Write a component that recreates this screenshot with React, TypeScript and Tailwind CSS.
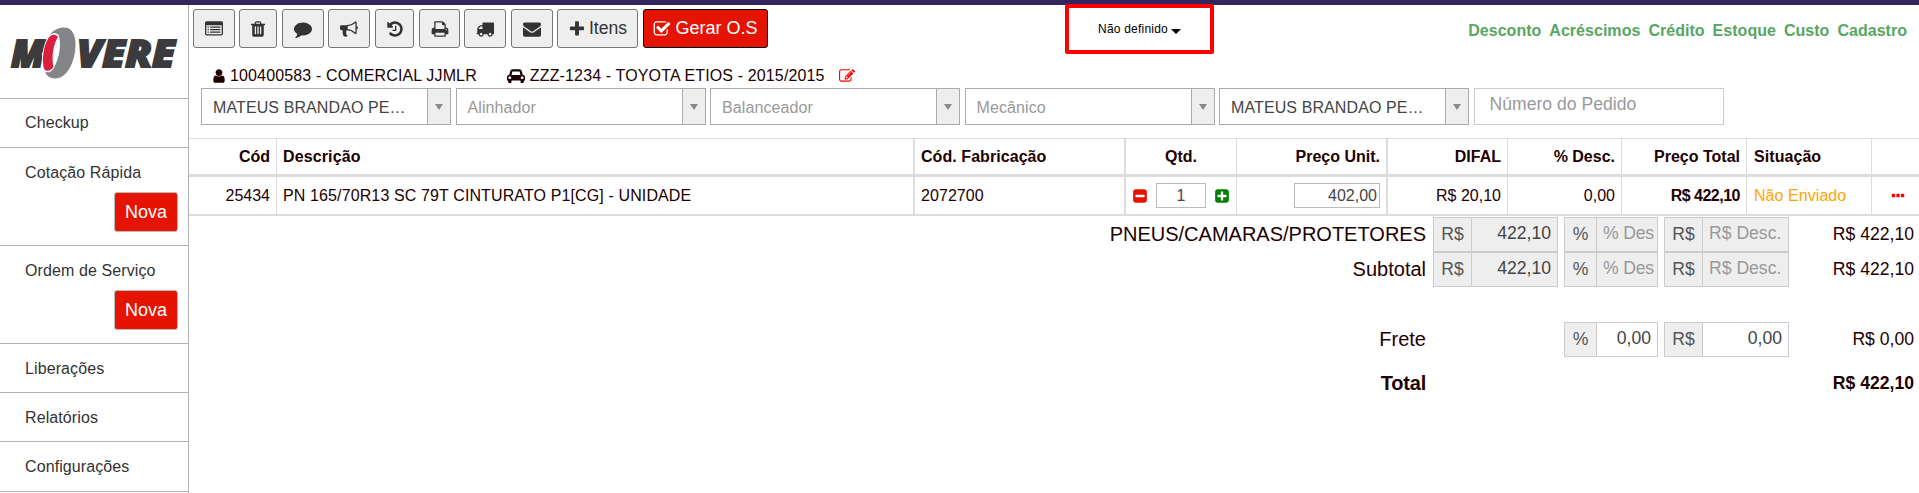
import type { ReactNode } from "react";

type IconName = keyof typeof icons;

const icons = {
  list: "M384 1184v64q0 13-9.5 22.5t-22.5 9.5h-64q-13 0-22.5-9.5t-9.5-22.5v-64q0-13 9.5-22.5t22.5-9.5h64q13 0 22.5 9.5t9.5 22.5zm0-256v64q0 13-9.5 22.5t-22.5 9.5h-64q-13 0-22.5-9.5t-9.5-22.5v-64q0-13 9.5-22.5t22.5-9.5h64q13 0 22.5 9.5t9.5 22.5zm0-256v64q0 13-9.5 22.5t-22.5 9.5h-64q-13 0-22.5-9.5t-9.5-22.5v-64q0-13 9.5-22.5t22.5-9.5h64q13 0 22.5 9.5t9.5 22.5zm1152 512v64q0 13-9.5 22.5t-22.5 9.5h-960q-13 0-22.5-9.5t-9.5-22.5v-64q0-13 9.5-22.5t22.5-9.5h960q13 0 22.5 9.5t9.5 22.5zm0-256v64q0 13-9.5 22.5t-22.5 9.5h-960q-13 0-22.5-9.5t-9.5-22.5v-64q0-13 9.5-22.5t22.5-9.5h960q13 0 22.5 9.5t9.5 22.5zm0-256v64q0 13-9.5 22.5t-22.5 9.5h-960q-13 0-22.5-9.5t-9.5-22.5v-64q0-13 9.5-22.5t22.5-9.5h960q13 0 22.5 9.5t9.5 22.5zm128 704v-832q0-13-9.5-22.5t-22.5-9.5h-1472q-13 0-22.5 9.5t-9.5 22.5v832q0 13 9.5 22.5t22.5 9.5h1472q13 0 22.5-9.5t9.5-22.5zm128-1088v1088q0 66-47 113t-113 47h-1472q-66 0-113-47t-47-113v-1088q0-66 47-113t113-47h1472q66 0 113 47t47 113z",
  trash: "M704 1376v-704q0-14-9-23t-23-9h-64q-14 0-23 9t-9 23v704q0 14 9 23t23 9h64q14 0 23-9t9-23zm256 0v-704q0-14-9-23t-23-9h-64q-14 0-23 9t-9 23v704q0 14 9 23t23 9h64q14 0 23-9t9-23zm256 0v-704q0-14-9-23t-23-9h-64q-14 0-23 9t-9 23v704q0 14 9 23t23 9h64q14 0 23-9t9-23zm-544-992h448l-48-117q-7-9-17-11h-317q-10 2-17 11zm928 32v64q0 14-9 23t-23 9h-96v948q0 83-47 143.5t-113 60.5h-832q-66 0-113-58.5t-47-141.5v-952h-96q-14 0-23-9t-9-23v-64q0-14 9-23t23-9h309l70-167q15-37 54-63t79-26h320q40 0 79 26t54 63l70 167h309q14 0 23 9t9 23z",
  comment: "M1792 896q0 174-120 321.5t-326 233-450 85.5q-70 0-145-8-198 175-460 242-49 14-114 22-17 2-30.5-9t-17.5-29v-1q-3-4-.5-12t2-10 4.5-9.5l6-9 7-8.5 8-9q7-8 31-34.5t34.5-38 31-39.5 32.5-51 27-59 26-76q-157-89-247.5-220t-90.5-281q0-130 71-248.5t191-204.5 286-136.5 348-50.5q244 0 450 85.5t326 233 120 321.5z",
  bullhorn: "M1664 640q53 0 90.5 37.5t37.5 90.5-37.5 90.5-90.5 37.5v384q0 52-38 90t-90 38q-417-347-812-380-58 19-91 66t-31 100.5 40 92.5q-20 33-23 65.5t6 58 33.5 55 48 50 61.5 50.5q-29 58-111.5 83t-168.5 11.5-132-55.5q-7-23-29.5-87.5t-32-94.5-23-89-15-101 3.5-98.5 22-110.5h-122q-66 0-113-47t-47-113v-192q0-66 47-113t113-47h480q435 0 896-384 52 0 90 38t38 90v384zm-128 604v-954q-394 302-768 343v270q377 42 768 341z",
  history: "M1664 896q0 156-61 298t-164 245-245 164-298 61q-172 0-327-72.5t-264-204.5q-7-10-6.5-22.5t8.5-20.5l137-138q10-9 25-9 16 2 23 12 73 95 179 147t225 52q104 0 198.5-40.5t163.5-109.5 109.5-163.5 40.5-198.5-40.5-198.5-109.5-163.5-163.5-109.5-198.5-40.5q-98 0-188 35.5t-160 101.5l137 138q31 30 14 69-17 40-59 40h-448q-26 0-45-19t-19-45v-448q0-42 40-59 39-17 69 14l130 129q107-101 244.5-156.5t284.5-55.5q156 0 298 61t245 164 164 245 61 298zm-640-288v448q0 14-9 23t-23 9h-320q-14 0-23-9t-9-23v-64q0-14 9-23t23-9h224v-352q0-14 9-23t23-9h64q14 0 23 9t9 23z",
  print: "M448 1536h896v-256h-896v256zm0-640h896v-384h-160q-40 0-68-28t-28-68v-160h-640v640zm1152 64q0-26-19-45t-45-19-45 19-19 45 19 45 45 19 45-19 19-45zm128 0v416q0 13-9.5 22.5t-22.5 9.5h-224v160q0 40-28 68t-68 28h-960q-40 0-68-28t-28-68v-160h-224q-13 0-22.5-9.5t-9.5-22.5v-416q0-79 56.5-135.5t135.5-56.5h64v-544q0-40 28-68t68-28h672q40 0 88 20t76 48l152 152q28 28 48 76t20 88v256h64q79 0 135.5 56.5t56.5 135.5z",
  truck: "M640 1408q0-52-38-90t-90-38-90 38-38 90 38 90 90 38 90-38 38-90zm-384-512h384v-256h-158q-13 0-22 9l-195 195q-9 9-9 22v30zm1280 512q0-52-38-90t-90-38-90 38-38 90 38 90 90 38 90-38 38-90zm256-1088v1024q0 15-4 26.5t-13.5 18.5-16.5 11.5-23.5 6-22.5 2-25.5 0-22.5-.5q0 106-75 181t-181 75-181-75-75-181h-384q0 106-75 181t-181 75-181-75-75-181h-64q-3 0-22.5.5t-25.5 0-22.5-2-23.5-6-16.5-11.5-13.5-18.5-4-26.5q0-26 19-45t45-19v-320q0-8-.5-35t0-38 2.5-34.5 6.5-37 14-30.5 22.5-30l198-198q19-19 50.5-32t58.5-13h160v-192q0-26 19-45t45-19h1024q26 0 45 19t19 45z",
  envelope: "M1792 710v794q0 66-47 113t-113 47h-1472q-66 0-113-47t-47-113v-794q44 49 101 87 362 246 497 345 57 42 92.5 65.5t94.5 48 110 24.5h2q51 0 110-24.5t94.5-48 92.5-65.5q170-123 498-345 57-39 100-87zm0-294q0 79-49 151t-122 123q-376 261-468 325-10 7-42.5 31t-54 38.5-52 32.5-57.5 27-50 9h-2q-23 0-50-9t-57.5-27-52-32.5-54-38.5-42.5-31q-91-64-262-182.5t-205-142.5q-62-42-117-115.5t-55-136.5q0-78 41.5-130t118.5-52h1472q65 0 112.5 47t47.5 113z",
  plus: "M1600 736v192q0 40-28 68t-68 28h-416v416q0 40-28 68t-68 28h-192q-40 0-68-28t-28-68v-416h-416q-40 0-68-28t-28-68v-192q0-40 28-68t68-28h416v-416q0-40 28-68t68-28h192q40 0 68 28t28 68v416h416q40 0 68 28t28 68z",
  check: "M1472 930v318q0 119-84.5 203.5t-203.5 84.5h-832q-119 0-203.5-84.5t-84.5-203.5v-832q0-119 84.5-203.5t203.5-84.5h832q63 0 117 25 15 7 18 23 3 17-9 29l-49 49q-10 10-23 10-3 0-9-2-23-6-45-6h-832q-66 0-113 47t-47 113v832q0 66 47 113t113 47h832q66 0 113-47t47-113v-254q0-13 9-22l64-64q10-10 23-10 6 0 12 3 20 8 20 29zm231-489l-814 814q-24 24-57 24t-57-24l-430-430q-24-24-24-57t24-57l110-110q24-24 57-24t57 24l263 263 647-647q24-24 57-24t57 24l110 110q24 24 24 57t-24 57z",
  user: "M1536 1399q0 109-62.5 187t-150.5 78h-854q-88 0-150.5-78t-62.5-187q0-85 8.5-160.5t31.5-152 58.5-131 94-89 134.5-34.5q131 128 313 128t313-128q76 0 134.5 34.5t94 89 58.5 131 31.5 152 8.5 160.5zm-256-887q0 159-112.5 271.5t-271.5 112.5-271.5-112.5-112.5-271.5 112.5-271.5 271.5-112.5 271.5 112.5 112.5 271.5z",
  car: "M480 1088q0-66-47-113t-113-47-113 47-47 113 47 113 113 47 113-47 47-113zm36-320h1016l-89-357q-2-8-14-17.5t-21-9.5h-768q-9 0-21 9.5t-14 17.5zm1372 320q0-66-47-113t-113-47-113 47-47 113 47 113 113 47 113-47 47-113zm160-96v384q0 14-9 23t-23 9h-96v128q0 80-56 136t-136 56-136-56-56-136v-128h-1024v128q0 80-56 136t-136 56-136-56-56-136v-128h-96q-14 0-23-9t-9-23v-384q0-93 65.5-158.5t158.5-65.5h28l105-419q23-94 104-157.5t179-63.5h768q98 0 179 63.5t104 157.5l105 419h28q93 0 158.5 65.5t65.5 158.5z",
  edit: "M888 1184l116-116-152-152-116 116v56h96v96h56zm440-720q-16-16-33 1l-350 350q-17 17-1 33t33-1l350-350q17-17 1-33zm80 594v190q0 119-84.5 203.5t-203.5 84.5h-832q-119 0-203.5-84.5t-84.5-203.5v-832q0-119 84.5-203.5t203.5-84.5h832q63 0 117 25 15 7 18 23 3 17-9 29l-49 49q-14 14-32 8-23-6-45-6h-832q-66 0-113 47t-47 113v832q0 66 47 113t113 47h832q66 0 113-47t47-113v-126q0-13 9-22l64-64q15-15 35-7t20 29zm-96-738l288 288-672 672h-288v-288zm444 132l-92 92-288-288 92-92q28-28 68-28t68 28l152 152q28 28 28 68t-28 68z",
  minusSquare: "M1408 960v-128q0-26-19-45t-45-19h-896q-26 0-45 19t-19 45v128q0 26 19 45t45 19h896q26 0 45-19t19-45zm256-544v960q0 119-84.5 203.5t-203.5 84.5h-960q-119 0-203.5-84.5t-84.5-203.5v-960q0-119 84.5-203.5t203.5-84.5h960q119 0 203.5 84.5t84.5 203.5z",
  plusSquare: "M1408 960v-128q0-26-19-45t-45-19h-320v-320q0-26-19-45t-45-19h-128q-26 0-45 19t-19 45v320h-320q-26 0-45 19t-19 45v128q0 26 19 45t45 19h320v320q0 26 19 45t45 19h128q26 0 45-19t19-45v-320h320q26 0 45-19t19-45zm256-544v960q0 119-84.5 203.5t-203.5 84.5h-960q-119 0-203.5-84.5t-84.5-203.5v-960q0-119 84.5-203.5t203.5-84.5h960q119 0 203.5 84.5t84.5 203.5z",
  dots: "M576 736v192q0 40-28 68t-68 28h-192q-40 0-68-28t-28-68v-192q0-40 28-68t68-28h192q40 0 68 28t28 68zm512 0v192q0 40-28 68t-68 28h-192q-40 0-68-28t-28-68v-192q0-40 28-68t68-28h192q40 0 68 28t28 68zm512 0v192q0 40-28 68t-68 28h-192q-40 0-68-28t-28-68v-192q0-40 28-68t68-28h192q40 0 68 28t28 68z",
};

function Icon({ name, className }: { name: IconName; className: string }) {
  return (
    <svg
      viewBox={name === "car" ? "0 0 2048 1792" : "0 0 1792 1792"}
      className={`shrink-0 ${className}`}
      fill="currentColor"
    >
      <path d={icons[name]} />
    </svg>
  );
}

const toolbar: { icon: IconName; className: string }[] = [
  { icon: "list", className: "w-[42px]" },
  { icon: "trash", className: "ml-1 w-[38px]" },
  { icon: "comment", className: "ml-[5px] w-[42px]" },
  { icon: "bullhorn", className: "ml-1 w-[42px]" },
  { icon: "history", className: "ml-[5px] w-[39px]" },
  { icon: "print", className: "ml-[5px] w-[41px]" },
  { icon: "truck", className: "ml-1 w-[42px]" },
  { icon: "envelope", className: "ml-[5px] w-[42px]" },
];

const quickLinks = [
  "Desconto",
  "Acréscimos",
  "Crédito",
  "Estoque",
  "Custo",
  "Cadastro",
];

const selects = [
  { text: "MATEUS BRANDAO PE…", filled: true },
  { text: "Alinhador", filled: false },
  { text: "Balanceador", filled: false },
  { text: "Mecânico", filled: false },
  { text: "MATEUS BRANDAO PE…", filled: true },
];

const menu = [
  { label: "Checkup", hasNew: false, className: "h-[49px] pt-3" },
  { label: "Cotação Rápida", hasNew: true, className: "h-[98px] pt-[13px]" },
  { label: "Ordem de Serviço", hasNew: true, className: "h-[98px] pt-[13px]" },
  { label: "Liberações", hasNew: false, className: "h-[49px] pt-[13px]" },
  { label: "Relatórios", hasNew: false, className: "h-[49px] pt-[13px]" },
  { label: "Configurações", hasNew: false, className: "h-[50px] pt-[13px]" },
];

const columns = [
  { title: "Cód", className: "border-r justify-end" },
  { title: "Descrição", className: "border-r-2 tracking-[0.12px]" },
  { title: "Cód. Fabricação", className: "border-r-2 tracking-[0.06px]" },
  { title: "Qtd.", className: "border-r justify-center" },
  { title: "Preço Unit.", className: "border-r-2 justify-end" },
  { title: "DIFAL", className: "border-r justify-end" },
  { title: "% Desc.", className: "border-r justify-end" },
  { title: "Preço Total", className: "border-r justify-end" },
  { title: "Situação", className: "border-r pl-[7px]! tracking-[0.06px]" },
  { title: "", className: "" },
];

const gridCols =
  "grid grid-cols-[88px_638px_211px_111px_151px_120px_114px_125px_125px_47px]";

function Logo() {
  return (
    <svg className="h-[93px] w-[188px]" viewBox="0 0 188 93">
      <g
        fill="#3b3b3d"
        stroke="#3b3b3d"
        strokeWidth="1.8"
        fontFamily="'Open Sans', sans-serif"
        fontWeight="800"
        fontStyle="italic"
        fontSize="37"
      >
        <text x="11" y="61.5" textLength="34" lengthAdjust="spacingAndGlyphs">
          M
        </text>
        <text x="77" y="61.5" textLength="98" lengthAdjust="spacingAndGlyphs">
          VERE
        </text>
      </g>
      <g transform="translate(0 10) scale(0.3333)">
        <path
          d="M148 60C160 43 177 36 192 36c24 0 36 22 36 52 0 52-26 104-63 104-15 0-27-8-32-24l-6-50z"
          fill="#848589"
          stroke="#fff"
          strokeWidth="3"
        />
        <path
          d="M176 60c8 24 4 66-14 98-8 14-20 18-32 10-6-30-4-80 16-104 8-10 22-12 30-4z"
          fill="#fff"
        />
        <path
          d="M146 68c7-10 22-12 28-2-15 24-19 56-14 90-8 14-24 16-29 2-5-30 0-68 15-90z"
          fill="#dc1f3e"
        />
      </g>
    </svg>
  );
}

function Sidebar() {
  return (
    <aside className="w-[189px] shrink-0 border-r border-[#b3b3b3] text-[#333]">
      <div className="h-[94px] border-b border-[#b3b3b3]">
        <Logo />
      </div>
      {menu.map((item) => (
        <div
          key={item.label}
          className={`border-b border-[#b3b3b3] pl-[25px] leading-6 tracking-[0.1px] ${item.className}`}
        >
          <div>{item.label}</div>
          {item.hasNew && (
            <div className="mt-[7px] mr-2.5 flex justify-end">
              <button className="h-10 w-16 rounded-[3px] border border-[#bbb] bg-[#e51400] text-[18px] tracking-normal text-white">
                Nova
              </button>
            </div>
          )}
        </div>
      ))}
    </aside>
  );
}

function Toolbar() {
  return (
    <div className="flex h-[59px] pt-1 pl-1">
      {toolbar.map((b) => (
        <button
          key={b.icon}
          className={`flex h-[39px] items-center justify-center rounded-[3px] border border-[#777] bg-[#eee] text-[#333] ${b.className}`}
        >
          <Icon name={b.icon} className="h-[18px] w-[18px]" />
        </button>
      ))}
      <button className="ml-1 flex h-[39px] w-[81px] items-center justify-center gap-[3px] rounded-[3px] border border-[#777] bg-[#eee] text-[17.6px] text-[#333]">
        <Icon name="plus" className="h-[18px] w-[18px]" />
        Itens
      </button>
      <button className="ml-[5px] flex h-[39px] w-[125px] items-center justify-center gap-1 rounded-[3px] border border-black bg-[#e51400] text-[18px] text-white">
        <Icon name="check" className="h-[18px] w-[18px]" />
        Gerar O.S
      </button>
      <div className="-mt-[5px] ml-[297px] flex h-[50px] w-[149px] items-center justify-center rounded-[2px] border-4 border-[#ff0000] text-[12px] tracking-[0.2px] text-black">
        Não definido
        <span className="mt-1 ml-[3px] border-x-[5px] border-t-[5px] border-x-transparent border-t-black" />
      </div>
      <div className="mt-2.5 mr-3 ml-auto flex gap-2 leading-6 font-bold tracking-[0.03px] text-[#58a662]">
        {quickLinks.map((link) => (
          <a key={link}>{link}</a>
        ))}
      </div>
    </div>
  );
}

function Filters() {
  return (
    <div className="flex gap-[4.5px] pl-3">
      {selects.map((s, i) => (
        <div key={i} className="flex h-[37px] w-[250px] border border-[#aaa]">
          <span
            className={`flex-1 pl-[11px] leading-[37px] tracking-[0.1px] ${
              s.filled ? "text-[#444]" : "text-[#999]"
            }`}
          >
            {s.text}
          </span>
          <span className="flex w-[23px] items-center justify-center border-l border-[#aaa] bg-[#eee]">
            <span className="border-x-4 border-t-[6px] border-x-transparent border-t-[#888]" />
          </span>
        </div>
      ))}
      <div className="h-[37px] w-[250px] border border-[#ccc] pl-[15px] text-[17.6px] leading-[30px] text-[#999]">
        Número do Pedido
      </div>
    </div>
  );
}

function Cell({ index, children }: { index: number; children?: ReactNode }) {
  return (
    <div
      className={`flex items-center border-[#ddd] px-1.5 ${columns[index].className}`}
    >
      {children}
    </div>
  );
}

function ItemsTable() {
  return (
    <div className="mt-[13px] border-t border-b-2 border-[#ddd]">
      <div className={`${gridCols} h-[38px] border-b-3 border-[#ddd] font-bold`}>
        {columns.map((c, i) => (
          <Cell key={i} index={i}>
            {c.title}
          </Cell>
        ))}
      </div>
      <div className={`${gridCols} h-[37px]`}>
        <Cell index={0}>25434</Cell>
        <Cell index={1}>PN 165/70R13 SC 79T CINTURATO P1[CG] - UNIDADE</Cell>
        <Cell index={2}>2072700</Cell>
        <Cell index={3}>
          <Icon name="minusSquare" className="h-4 w-4 text-[#e51400]" />
          <span className="mx-2 h-[25px] w-[50px] border border-[#bbb] text-center text-[#444]">
            1
          </span>
          <Icon name="plusSquare" className="h-4 w-4 text-[#008000]" />
        </Cell>
        <Cell index={4}>
          <span className="h-[25px] w-[86px] border border-[#bbb] pr-0.5 text-right text-[#444]">
            402,00
          </span>
        </Cell>
        <Cell index={5}>R$ 20,10</Cell>
        <Cell index={6}>0,00</Cell>
        <Cell index={7}>
          <b className="tracking-[-0.5px]">R$ 422,10</b>
        </Cell>
        <Cell index={8}>
          <span className="text-[#ffa500]">Não Enviado</span>
        </Cell>
        <Cell index={9}>
          <Icon name="dots" className="ml-3 h-4 w-4 text-[#ff0000]" />
        </Cell>
      </div>
    </div>
  );
}

function Field({
  unit,
  value,
  placeholder,
  disabled,
  className,
  unitClass,
}: {
  unit: string;
  value?: string;
  placeholder?: string;
  disabled?: boolean;
  className: string;
  unitClass: string;
}) {
  return (
    <div
      className={`flex h-[35px] border border-[#ccc] text-[17.6px] leading-[33px] ${className} ${
        disabled ? "bg-[#eee]" : "bg-white"
      }`}
    >
      <span
        className={`shrink-0 border-r border-[#ccc] bg-[#eee] text-center text-[#555] ${unitClass}`}
      >
        {unit}
      </span>
      <span
        className={`flex-1 leading-[31px] whitespace-nowrap ${
          value ? "pr-1.5 text-right text-[#444]" : "pl-1.5 text-left text-[#999]"
        }`}
      >
        {value ?? placeholder}
      </span>
    </div>
  );
}

function DisabledRow({ label }: { label: string }) {
  return (
    <div className="flex h-[35px]">
      <div className="w-[1237px] text-right text-[20px] leading-[34px]">
        {label}
      </div>
      <Field
        unit="R$"
        value="422,10"
        disabled
        className="ml-[7px] w-[125px]"
        unitClass="w-[38px]"
      />
      <Field
        unit="%"
        placeholder="% Des"
        disabled
        className="ml-1.5 w-[94px] tracking-[-0.2px]"
        unitClass="w-8"
      />
      <Field
        unit="R$"
        placeholder="R$ Desc."
        disabled
        className="ml-1.5 w-[125px]"
        unitClass="w-[38px]"
      />
      <div className="ml-auto pr-[5px] text-[17.6px] leading-[34px]">
        R$ 422,10
      </div>
    </div>
  );
}

function Totals() {
  return (
    <div>
      <DisabledRow label="PNEUS/CAMARAS/PROTETORES" />
      <DisabledRow label="Subtotal" />
      <div className="mt-[35px] flex h-[35px]">
        <div className="w-[1237px] text-right text-[20px] leading-[34px]">
          Frete
        </div>
        <Field
          unit="%"
          value="0,00"
          className="ml-[138px] w-[94px]"
          unitClass="w-8"
        />
        <Field
          unit="R$"
          value="0,00"
          className="ml-1.5 w-[125px]"
          unitClass="w-[38px]"
        />
        <div className="ml-auto pr-[5px] text-[17.6px] leading-[34px]">
          R$ 0,00
        </div>
      </div>
      <div className="mt-2.5 flex h-8 leading-8 font-bold">
        <div className="w-[1237px] text-right text-[20px] tracking-[-0.2px]">
          Total
        </div>
        <div className="ml-auto pr-[5px] text-[17.6px]">R$ 422,10</div>
      </div>
    </div>
  );
}

export default function App() {
  return (
    <div className="h-[493px] w-[1919px] overflow-hidden bg-white font-['Liberation_Sans',Arial,sans-serif] text-base text-[#1d0000]">
      <div className="h-[5px] bg-[#33265f]" />
      <div className="flex h-[488px]">
        <Sidebar />
        <main className="w-[1730px]">
          <Toolbar />
          <div className="flex h-6 items-center pl-[22px] leading-6 tracking-[0.14px]">
            <Icon name="user" className="h-4 w-4" />
            <span className="ml-[3px]">100400583 - COMERCIAL JJMLR</span>
            <Icon name="car" className="ml-[30px] h-4 w-[18px]" />
            <span className="ml-[5px]">ZZZ-1234 - TOYOTA ETIOS - 2015/2015</span>
            <Icon name="edit" className="ml-3.5 h-4 w-4 text-[#ff0000]" />
          </div>
          <Filters />
          <ItemsTable />
          <div className="h-px" />
          <Totals />
        </main>
      </div>
    </div>
  );
}
